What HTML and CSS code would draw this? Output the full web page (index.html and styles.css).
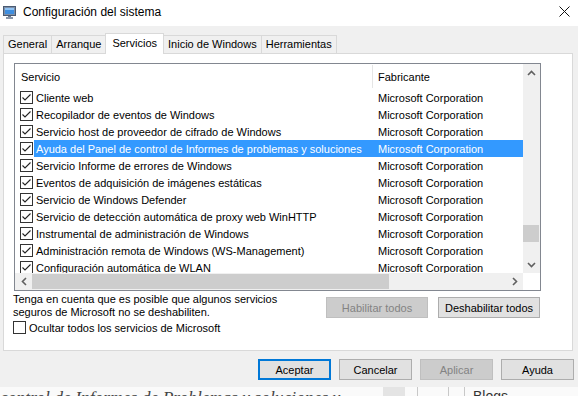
FILE: index.html
```html
<!DOCTYPE html>
<html lang="es">
<head>
  <meta charset="UTF-8">
  <title>Configuración del sistema</title>
  <link rel="stylesheet" href="styles.css">
</head>
<body>
  <div class="window">
    <!-- Barra de titulo -->
    <div class="titlebar">
      <svg class="app-icon" width="13" height="13" viewBox="0 0 13 13">
        <rect x="0.5" y="0.5" width="12" height="9" fill="#7d8fa8" stroke="#4a5a72"/>
        <rect x="2" y="2" width="9" height="6" fill="#3f8fe0"/>
        <rect x="2" y="2" width="9" height="2" fill="#8fc3f5"/>
        <rect x="5" y="10" width="3" height="1" fill="#6b7a90"/>
        <rect x="3" y="11" width="7" height="2" fill="#8a96a8"/>
      </svg>
      <span class="title">Configuración del sistema</span>
      <svg class="close" width="11" height="11" viewBox="0 0 11 11">
        <path d="M0.5 0.5 L10.5 10.5 M10.5 0.5 L0.5 10.5" stroke="#111" stroke-width="1"/>
      </svg>
    </div>

    <!-- Pestañas -->
    <div class="tabs">
      <div class="tab">General</div>
      <div class="tab">Arranque</div>
      <div class="tab active">Servicios</div>
      <div class="tab">Inicio de Windows</div>
      <div class="tab">Herramientas</div>
    </div>

    <div class="panel">
      <div class="listbox">
        <div class="list-content">
          <div class="list-header">
            <div class="col-service">Servicio</div>
            <div class="col-maker">Fabricante</div>
          </div>
          <div id="rows"></div>
        </div>

        <div class="vscroll">
          <div class="sb-btn">
            <svg width="9" height="6" viewBox="0 0 9 6"><path d="M1 5 L4.5 1.5 L8 5" stroke="#606060" stroke-width="1.6" fill="none"/></svg>
          </div>
          <div class="sb-track"><div class="vthumb"></div></div>
          <div class="sb-btn">
            <svg width="9" height="6" viewBox="0 0 9 6"><path d="M1 1 L4.5 4.5 L8 1" stroke="#606060" stroke-width="1.6" fill="none"/></svg>
          </div>
        </div>

        <div class="hscroll">
          <div class="sb-btn">
            <svg width="6" height="9" viewBox="0 0 6 9"><path d="M5 1 L1.5 4.5 L5 8" stroke="#606060" stroke-width="1.6" fill="none"/></svg>
          </div>
          <div class="sb-track"><div class="hthumb"></div></div>
          <div class="sb-btn">
            <svg width="6" height="9" viewBox="0 0 6 9"><path d="M1 1 L4.5 4.5 L1 8" stroke="#606060" stroke-width="1.6" fill="none"/></svg>
          </div>
        </div>
        <div class="corner"></div>
      </div>

      <div class="panel-footer">
        <div class="footer-left">
          <p class="note">Tenga en cuenta que es posible que algunos servicios<br>seguros de Microsoft no se deshabiliten.</p>
          <label class="hide-ms">
            <span class="checkbox"></span>
            <span>Ocultar todos los servicios de Microsoft</span>
          </label>
        </div>
        <div class="footer-buttons">
          <button class="btn wide" disabled>Habilitar todos</button>
          <button class="btn wide">Deshabilitar todos</button>
        </div>
      </div>
    </div>

    <div class="dialog-buttons">
      <button class="btn default">Aceptar</button>
      <button class="btn">Cancelar</button>
      <button class="btn" disabled>Aplicar</button>
      <button class="btn">Ayuda</button>
    </div>
  </div>

  <!-- Lo que asoma de la pagina de detras -->
  <div class="behind">
    <span class="behind-text">control de Informes de Problemas y soluciones y</span>
    <span class="behind-box"></span>
    <span class="behind-line first"></span>
    <span class="behind-line"></span>
    <span class="behind-line"></span>
    <span class="behind-blogs">Blogs</span>
  </div>

  <script>
    const services = [
      "Cliente web",
      "Recopilador de eventos de Windows",
      "Servicio host de proveedor de cifrado de Windows",
      "Ayuda del Panel de control de Informes de problemas y soluciones",
      "Servicio Informe de errores de Windows",
      "Eventos de adquisición de imágenes estáticas",
      "Servicio de Windows Defender",
      "Servicio de detección automática de proxy web WinHTTP",
      "Instrumental de administración de Windows",
      "Administración remota de Windows (WS-Management)",
      "Configuración automática de WLAN"
    ];
    const selected = 3;
    const rows = document.getElementById('rows');

    services.forEach((name, i) => {
      const row = document.createElement('div');
      row.className = 'row' + (i === selected ? ' selected' : '');
      row.innerHTML =
        '<span class="checkbox checked"></span>' +
        '<span class="cells"><span class="col-service"></span>' +
        '<span class="col-maker">Microsoft Corporation</span></span>';
      row.querySelector('.col-service').textContent = name;
      rows.appendChild(row);
    });
  </script>
</body>
</html>
```

FILE: styles.css
```css
* {
  box-sizing: border-box;
}
body {
  margin: 0;
  width: 578px;
  height: 396px;
  overflow: hidden;
  font-family: "Liberation Sans", Arial, sans-serif;
  font-size: 11px;
  color: #000;
  background-color: #fafafa;
}
.window {
  height: 387px;
  background-color: #f0f0f0;
  display: flex;
  flex-direction: column;
}
.titlebar {
  height: 26px;
  background-color: #fff;
  display: flex;
  align-items: center;
  padding-left: 3px;
}
.app-icon {
  margin-top: -2px;
}
.title {
  margin-left: 7px;
  font-size: 12px;
  margin-top: -3px;
}
.close {
  margin-left: auto;
  margin-right: 8px;
  margin-top: -4px;
}

/* Pestañas */
.tabs {
  display: flex;
  align-items: flex-end;
  height: 20px;
  margin-top: 7px;
  padding-left: 3px;
}
.tab {
  height: 18px;
  padding: 0 4px 0 4px;
  border: 1px solid #d9d9d9;
  border-bottom: none;
  margin-right: -1px;
  line-height: 17px;
  background-color: #f0f0f0;
}
.tab.active {
  height: 21px;
  padding: 1px 6px 0 6px;
  margin-bottom: -1px;
  background-color: #fff;
  position: relative;
  z-index: 1;
}
.panel {
  height: 298px;
  margin: 0 5px 0 3px;
  border: 1px solid #d9d9d9;
  background-color: #fff;
  padding: 9px 0 0 10px;
}

/* Lista de servicios */
.listbox {
  width: 527px;
  height: 228px;
  border: 1px solid #828790;
  display: grid;
  grid-template-columns: 508px 17px;
  grid-template-rows: 209px 17px;
}
.list-content {
  overflow: hidden;
}
.list-header {
  height: 25px;
  display: flex;
  align-items: center;
}
.list-header .col-service {
  width: 358px;
  height: 23px;
  padding-left: 6px;
  line-height: 24px;
  border-right: 1px solid #e5e5e5;
}
.list-header .col-maker {
  padding-left: 5px;
}
.row {
  height: 17px;
  display: flex;
  align-items: center;
  white-space: nowrap;
}
.row .checkbox {
  margin: 0 1px 0 5px;
}
.cells {
  display: flex;
  flex: 1;
  height: 17px;
  align-items: center;
}
.row .col-service {
  width: 339px;
  padding-left: 2px;
  overflow: hidden;
}
.row .col-maker {
  padding-left: 5px;
}
.row.selected .cells {
  background-color: #3399ff;
  color: #fff;
}
.checkbox {
  display: inline-block;
  width: 13px;
  height: 13px;
  border: 1px solid #333;
  background: #fff;
  flex: none;
}
.checkbox.checked {
  background: #fff url("data:image/svg+xml,%3Csvg xmlns='http://www.w3.org/2000/svg' width='11' height='11' viewBox='0 0 11 11'%3E%3Cpath d='M1.5 5.5 L4 8 L9.5 2.5' stroke='%23222' stroke-width='1.1' fill='none'/%3E%3C/svg%3E") no-repeat center;
}

/* Barras de desplazamiento */
.vscroll,
.hscroll {
  display: flex;
  background-color: #f0f0f0;
}
.vscroll {
  flex-direction: column;
}
.sb-btn {
  width: 17px;
  height: 17px;
  flex: none;
  display: flex;
  align-items: center;
  justify-content: center;
}
.sb-track {
  flex: 1;
  display: flex;
}
.vscroll .sb-track {
  flex-direction: column;
}
.vthumb {
  margin: 144px 1px 0 0;
  height: 17px;
  background-color: #cdcdcd;
}
.hthumb {
  margin: 1px 0 1px 0;
  width: 357px;
  background-color: #cdcdcd;
}
.corner {
  background-color: #fff;
}

/* Pie del panel */
.panel-footer {
  display: flex;
  padding-right: 32px;
}
.footer-left {
  margin-left: -1px;
}
.note {
  margin: 2px 0 0 0;
  line-height: 13px;
}
.hide-ms {
  display: flex;
  align-items: center;
  gap: 3px;
  margin-top: 2px;
}
.footer-buttons {
  margin-left: auto;
  margin-top: 6px;
  display: flex;
  gap: 10px;
}
.btn {
  height: 21px;
  width: 73px;
  padding: 0;
  font-family: inherit;
  font-size: 11px;
  color: #000;
  background-color: #e1e1e1;
  border: 1px solid #adadad;
}
.btn.wide {
  width: 102px;
}
.btn:disabled {
  color: #838383;
  background-color: #cccccc;
  border-color: #bfbfbf;
}
.btn.default {
  border: 2px solid #0078d7;
}
.dialog-buttons {
  display: flex;
  justify-content: flex-end;
  gap: 8px;
  margin: 8px 4px 0 0;
}

/* Pagina de detras */
.behind {
  height: 9px;
  display: flex;
  align-items: flex-end;
  overflow: hidden;
  white-space: nowrap;
}
.behind-text {
  width: 383px;
  flex: none;
  font-family: "Liberation Serif", serif;
  font-style: italic;
  font-size: 17.5px;
  line-height: 14px;
  margin-bottom: -8px;
  color: #444;
}
.behind-box {
  width: 22px;
  height: 9px;
  background-color: #e4e4e4;
  flex: none;
}
.behind-line {
  width: 1px;
  height: 9px;
  background-color: #c8c8c8;
  margin-left: 30px;
}
.behind-line.first {
  margin-left: 12px;
}
.behind-line + .behind-line + .behind-line {
  margin-left: 15px;
}
.behind-blogs {
  margin-left: 8px;
  font-size: 14px;
  line-height: 12px;
  margin-bottom: -6px;
  color: #333;
}
```
